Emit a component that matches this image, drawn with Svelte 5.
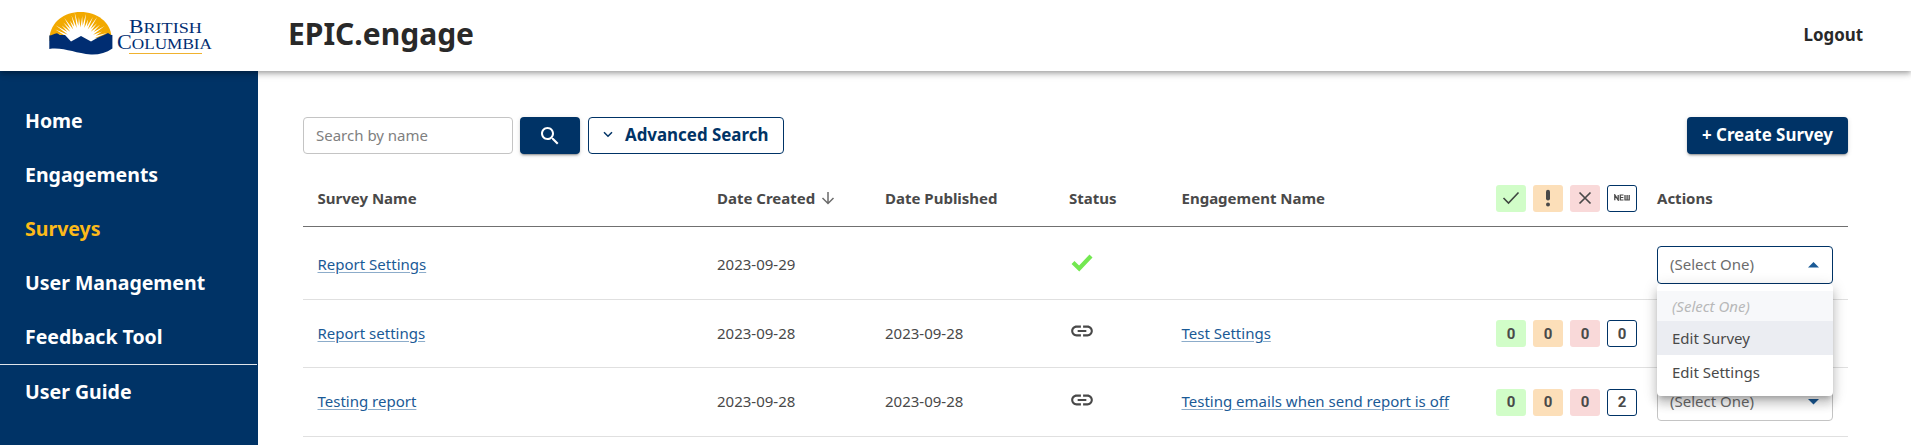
<script>
  const nav = ['Home', 'Engagements', 'Surveys', 'User Management', 'Feedback Tool', 'User Guide'];
  const rows = [
    { name: 'Report Settings', created: '2023-09-29', published: '', status: 'ready', engagement: '', counts: [] },
    { name: 'Report settings', created: '2023-09-28', published: '2023-09-28', status: 'linked', engagement: 'Test Settings', counts: [0, 0, 0, 0] },
    { name: 'Testing report', created: '2023-09-28', published: '2023-09-28', status: 'linked', engagement: 'Testing emails when send report is off', counts: [0, 0, 0, 2] }
  ];
  const tones = ['green', 'orange', 'red', 'outline'];
  // White burst: short inner points alternate with longer spikes cut into the gold disc.
  const spikes = [26, 29, 24, 28, 30, 25];
  const burst = Array.from({ length: 49 }, (_, i) => {
    const a = (i * 3.75 * Math.PI) / 180;
    const r = i % 2 ? spikes[((i - 1) / 2) % 6] : 14.5 + (i % 4);
    return `${(31.5 - r * Math.cos(a)).toFixed(2)},${(31 - r * Math.sin(a)).toFixed(2)}`;
  }).join(' ');
</script>

<div class="app">
  <header>
    <svg class="logo" width="164" height="46" viewBox="0 0 164 46">
      <path d="M0.500 27C1.500 11 15 1 31.500 1S61.500 11 62.500 26V30H0.500Z" fill="#f2a900" />
      <polygon points={burst} fill="#fff" />
      <path d="M0.300 24.500C3 24.500 5 22.800 8 22.200L11 24L16 24L22 30.500L32 25L42 30.500L49 26.500L55 24L59 22L62 24L63.400 24V37.500C57 42 50 43.800 42 43.500C26 42.500 15 36 0.300 38Z" fill="#002d72" />
      <g fill="#002d72" font-family="'Liberation Serif', serif">
        <text x="80" y="22" font-size="18.500" textLength="73" lengthAdjust="spacingAndGlyphs">B<tspan font-size="15.500">RITISH</tspan></text>
        <text x="68" y="38" font-size="20" textLength="95" lengthAdjust="spacingAndGlyphs">C<tspan font-size="15.500">OLUMBIA</tspan></text>
      </g>
      <rect x="80" y="42" width="73" height="1" fill="#f0b22e" />
    </svg>
    <h1>EPIC.engage</h1>
    <button class="logout">Logout</button>
  </header>

  <div class="body">
    <nav>
      {#each nav as item}
        <a href="#top" class:active={item === 'Surveys'} class:divided={item === 'User Guide'}>{item}</a>
      {/each}
    </nav>

    <main>
      <div class="toolbar">
        <input type="text" placeholder="Search by name" />
        <button class="solid search" aria-label="Search">
          <svg width="24" height="24" viewBox="0 0 24 24"><path fill="#fff" d="M15.500 14h-.790l-.280-.270C15.410 12.590 16 11.110 16 9.500 16 5.910 13.090 3 9.500 3S3 5.910 3 9.500 5.910 16 9.500 16c1.610 0 3.090-.590 4.230-1.570l.270.280v.790l5 4.990L20.490 19l-4.990-5zm-6 0C7.010 14 5 11.990 5 9.500S7.010 5 9.500 5 14 7.010 14 9.500 11.990 14 9.500 14z" /></svg>
        </button>
        <button class="advanced">
          <svg width="10" height="7" viewBox="0 0 10 7"><path d="M1 1.200L5 5.200L9 1.200" fill="none" stroke="#003366" stroke-width="1.500" /></svg>
          <span>Advanced Search</span>
        </button>
        <button class="solid create">+ Create Survey</button>
      </div>

      <div class="table">
        <div class="row head">
          <div>Survey Name</div>
          <div class="sorted">Date Created
            <svg width="14" height="14" viewBox="0 0 14 14"><path d="M7 1V12.500M1.500 7L7 12.500L12.500 7" fill="none" stroke="#6b6b6b" stroke-width="1.500" /></svg>
          </div>
          <div>Date Published</div>
          <div>Status</div>
          <div>Engagement Name</div>
          <div class="pills">
            <span class="pill green"><svg width="18" height="14" viewBox="0 0 18 14"><path d="M1.500 7L6.500 12L16.500 1.500" fill="none" stroke="#3f4640" stroke-width="1.600" /></svg></span>
            <span class="pill orange"><svg width="6" height="18" viewBox="0 0 6 18"><path d="M3 2.800V9.500" stroke="#494949" stroke-width="4" stroke-linecap="round" /><circle cx="3" cy="15.500" r="2" fill="#494949" /></svg></span>
            <span class="pill red"><svg width="14" height="14" viewBox="0 0 14 14"><path d="M1.500 1.500L12.500 12.500M12.500 1.500L1.500 12.500" stroke="#494949" stroke-width="1.700" /></svg></span>
            <span class="pill outline"><svg width="16" height="7" viewBox="0 0 16 8" preserveAspectRatio="none"><path d="M.8 7V1L4.200 7V1M9.500 1.200H6.300V6.800H9.500M6.300 4H9.300M11 1V6.800H15.200V1M13.100 1V6.800" fill="none" stroke="#494949" stroke-width="1.300" /></svg></span>
          </div>
          <div>Actions</div>
        </div>

        {#each rows as row, i}
          <div class="row" class:first={i === 0} class:last={i === 2}>
            <div class="cell"><a href="#top">{row.name}</a></div>
            <div class="cell">{row.created}</div>
            <div class="cell">{row.published}</div>
            <div class="status {row.status}">
              {#if row.status === 'ready'}
                <svg width="22" height="18" viewBox="0 0 22 18"><path d="M2 8.500L8.200 14.500L20 2" fill="none" stroke="#73e851" stroke-width="4.200" /></svg>
              {:else}
                <svg width="26" height="26" viewBox="0 0 24 24"><path fill="#494949" d="M3.900 12c0-1.710 1.390-3.100 3.100-3.100h4V7H7c-2.760 0-5 2.240-5 5s2.240 5 5 5h4v-1.900H7c-1.710 0-3.100-1.390-3.100-3.100zM8 13h8v-2H8v2zm9-6h-4v1.900h4c1.710 0 3.100 1.390 3.100 3.100s-1.390 3.100-3.100 3.100h-4V17h4c2.760 0 5-2.240 5-5s-2.240-5-5-5z" /></svg>
              {/if}
            </div>
            <div class="cell">{#if row.engagement}<a href="#top">{row.engagement}</a>{/if}</div>
            <div class="pills">
              {#each row.counts as count, j}<span class="pill count {tones[j]}">{count}</span>{/each}
            </div>
            {#if i !== 1}
              <div class="select" class:open={i === 0}>
                <span>(Select One)</span>
                <svg width="11" height="5.500" viewBox="0 0 10 5"><path d={i === 0 ? 'M0 5L5 0L10 5Z' : 'M0 0L5 5L10 0Z'} fill="#1a5a96" /></svg>
                {#if i === 0}
                  <div class="menu">
                    <div class="option none">(Select One)</div>
                    <div class="option hover">Edit Survey</div>
                    <div class="option">Edit Settings</div>
                  </div>
                {/if}
              </div>
            {/if}
          </div>
        {/each}
      </div>
    </main>
  </div>
</div>

<style>
  :global(body) { background: #fff; overflow: hidden; }
  .app { height: 445px; display: flex; flex-direction: column; overflow: hidden; font-family: "Noto Sans", sans-serif; color: #494949; font-size: 15px; }
  .app, .app * { box-sizing: border-box; }
  button { font-family: inherit; border: 0; padding: 0 0 2px; cursor: pointer; }
  header { position: relative; z-index: 2; flex: none; height: 71px; display: flex; align-items: center; padding: 0 48px 3px 49px; background: #fff; box-shadow: 0 2px 4px -1px rgba(0,0,0,.2), 0 4px 5px rgba(0,0,0,.14), 0 1px 10px rgba(0,0,0,.12); }
  .logo { flex: none; }
  h1 { margin: 0 auto 0 75px; font-size: 30px; line-height: 40px; font-weight: 700; color: #292929; }
  .logout { background: none; padding: 0; font-size: 16.900px; font-weight: 700; color: #292929; }
  .body { flex: 1; display: flex; min-height: 0; }
  nav { width: 258px; flex: none; background: #003366; padding-top: 23px; }
  nav a { display: flex; align-items: center; height: 54px; padding: 0 0 2px 25px; font-size: 19.500px; font-weight: 700; color: #fff; text-decoration: none; }
  nav a.active { color: #fcba19; }
  nav a.divided { height: 55px; border-top: 1px solid #dfe4ea; margin-right: 1px; }
  main { flex: 1; padding: 46px 63px 0 45px; }
  .toolbar { display: flex; height: 37px; }
  input { width: 210px; height: 37px; border: 1px solid #c4c4c4; border-radius: 4px; padding: 0 12px 2px; font: 15px "Noto Sans", sans-serif; color: #494949; outline: 0; }
  input::placeholder { color: #808080; opacity: 1; }
  .solid { background: #003366; color: #fff; border-radius: 4px; box-shadow: 0 3px 1px -2px rgba(0,0,0,.2), 0 2px 2px rgba(0,0,0,.14), 0 1px 5px rgba(0,0,0,.12); }
  .search { width: 60px; margin-left: 7px; padding: 0; display: grid; place-items: center; }
  .advanced { width: 196px; margin-left: 8px; display: flex; align-items: center; gap: 12px; padding-left: 14px; background: #fff; border: 1px solid #003366; border-radius: 4px; color: #003366; font-size: 16.900px; font-weight: 700; white-space: nowrap; }
  .create { width: 161px; margin-left: auto; font-size: 16.900px; font-weight: 700; }
  .table { margin-top: 16px; }
  .row { display: grid; grid-template-columns: 399.500px 168px 184px 112.500px 314.500px 161px 176px; align-items: center; height: 68px; padding-left: 14.500px; border-bottom: 1px solid #e0e0e0; white-space: nowrap; }
  .row.head { height: 57px; font-weight: 700; border-color: #707070; }
  .row.first { height: 73px; padding-top: 4px; }
  .row.last { height: 69px; }
  .row a { color: #1a5a96; text-decoration: underline; text-decoration-color: rgba(26,90,150,.5); text-underline-offset: 2px; }
  .cell { padding-bottom: 2px; }
  .sorted { display: flex; align-items: center; gap: 6px; }
  .pills { display: flex; gap: 7px; }
  .pill { width: 30px; height: 27px; border-radius: 3px; display: grid; place-items: center; font-weight: 700; }
  .head .pill { padding-bottom: 1px; }
  .count { font: 700 15px/20px Roboto, sans-serif; }
  .green { background: #d1fdc8; }
  .orange { background: #fcdfb9; }
  .red { background: #f9d9d9; }
  .outline { background: #fff; border: 1px solid #003366; }
  .status { display: flex; padding-left: 2px; padding-bottom: 4px; }
  .linked { padding-left: 0; padding-bottom: 5px; }
  .select { position: relative; display: flex; align-items: center; justify-content: space-between; height: 38px; padding: 0 13px 0 12px; border: 1px solid #c4c4c4; border-radius: 4px; color: #6c6c6c; background: #fff; }
  .select > span { padding-bottom: 2px; }
  .select.open { border-color: #003366; }
  .menu { position: absolute; z-index: 3; top: 37px; left: -1px; width: 176px; height: 112px; padding: 7px 0; background: #fff; border-radius: 4px; box-shadow: 0 5px 5px -3px rgba(0,0,0,.2), 0 8px 10px 1px rgba(0,0,0,.14), 0 3px 14px 2px rgba(0,0,0,.12); }
  .option { height: 34px; padding-left: 15px; display: flex; align-items: center; color: #494949; }
  .option.none { height: 30px; font-style: italic; color: #b8b8b9; background: #f7f8fa; }
  .option.hover { background: #ebedf2; }
</style>
